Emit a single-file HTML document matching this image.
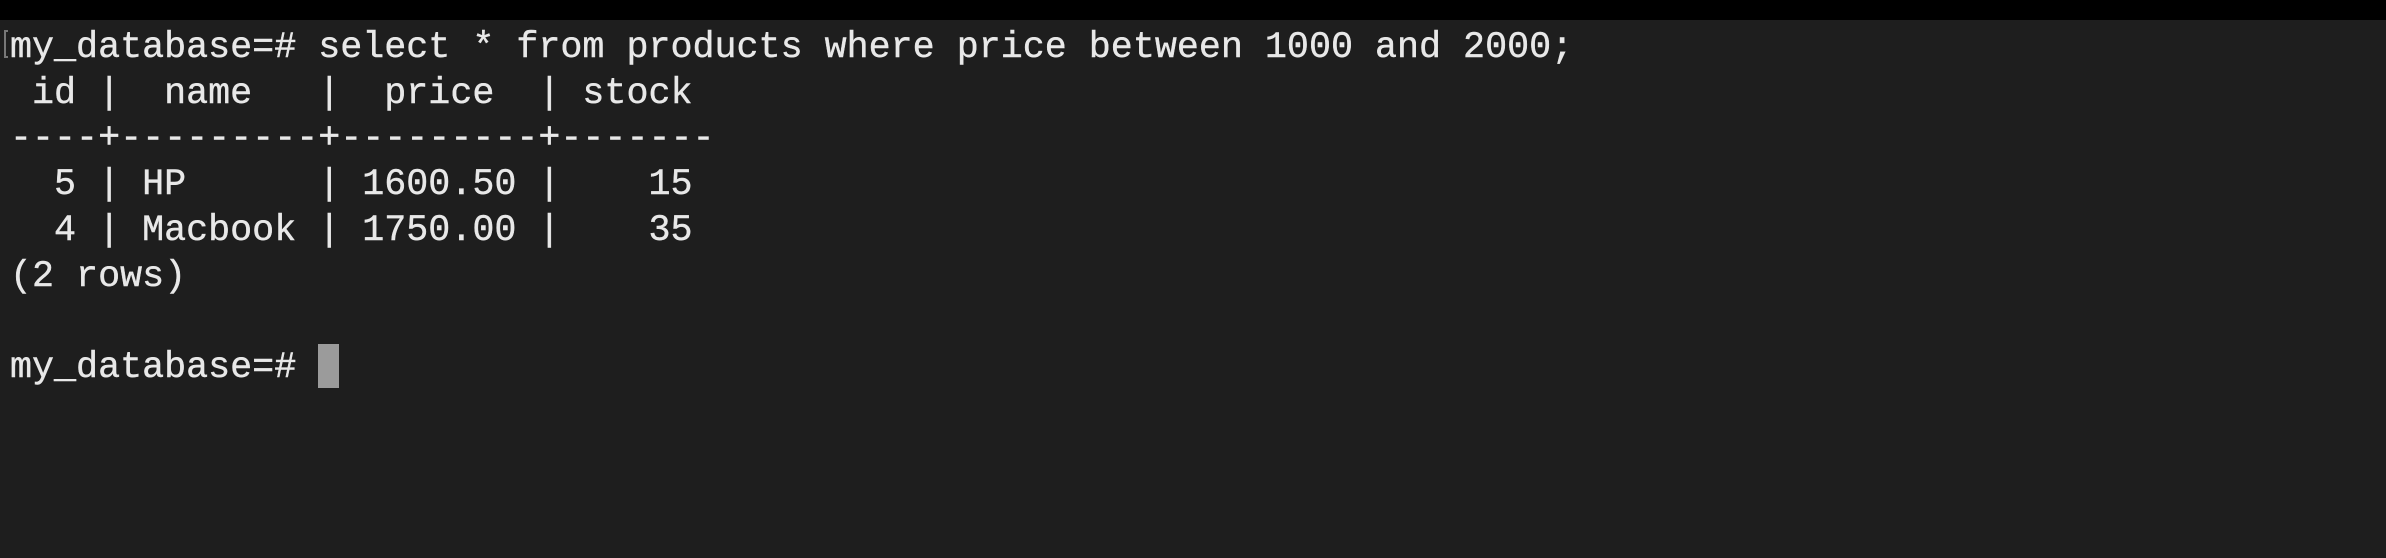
<!DOCTYPE html>
<html><head><meta charset="utf-8"><style>
html,body{margin:0;padding:0;width:2386px;height:558px;overflow:hidden;background:#1e1e1e}
.bar{position:absolute;left:0;top:0;width:2386px;height:20px;background:#000}
pre{position:absolute;left:10px;top:26px;margin:0;font-family:"Liberation Mono",monospace;font-size:36.7px;line-height:45.7px;color:#e8e8e8;white-space:pre;-webkit-text-stroke:0.4px #e8e8e8}
.br{position:absolute;left:4px;top:30px;height:28px;border:2px solid #777;border-right:none;box-sizing:border-box;width:4px}
.cur{position:absolute;left:318px;top:344px;width:21px;height:44px;background:#9b9b9b}
</style></head><body>
<div class="bar"></div>
<div class="br"></div>
<pre>my_database=# select * from products where price between 1000 and 2000;
 id |  name   |  price  | stock
----+---------+---------+-------
  5 | HP      | 1600.50 |    15
  4 | Macbook | 1750.00 |    35
(2 rows)

my_database=# </pre>
<div class="cur"></div>
</body></html>
